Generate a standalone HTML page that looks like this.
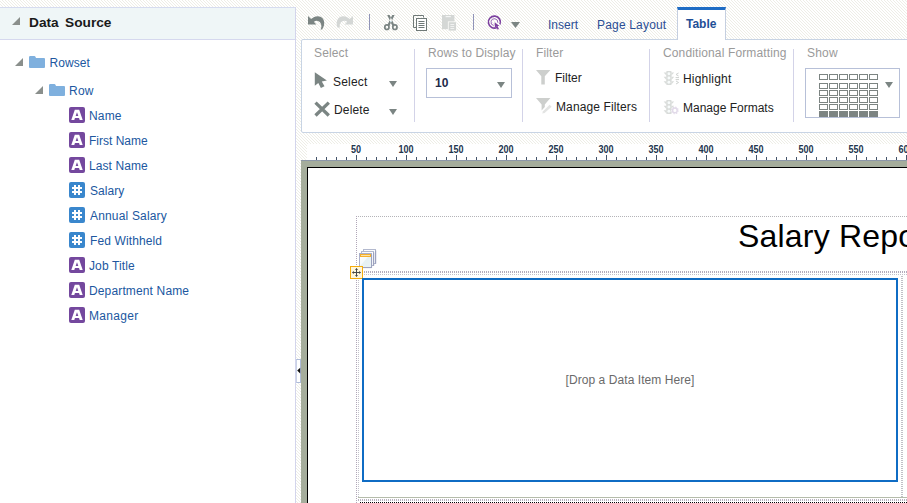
<!DOCTYPE html>
<html>
<head>
<meta charset="utf-8">
<style>
*{box-sizing:border-box;margin:0;padding:0}
html,body{width:907px;height:503px;overflow:hidden}
body{font-family:"Liberation Sans",sans-serif;position:relative;background:#fff}
.abs{position:absolute}
/* left panel */
#lp{left:0;top:7px;width:296px;height:496px;background:#fff;border-top:1px solid #d6dcef;border-right:1px solid #d3d5ec}
#lph{left:0;top:0;width:295px;height:32px;background:#eff6f7;border-bottom:1px solid #d5d8ee}
#lph .t{left:29px;top:7px;font-size:13.7px;font-weight:bold;color:#1a1a1a;word-spacing:2.6px}
.tri{width:0;height:0;border-left:8px solid transparent;border-bottom:8px solid #8a8f8c}
.node{font-size:12px;color:#20579f;white-space:nowrap}
.ico{width:15px;height:15px;border-radius:2px}
/* toolbar */
#tb{left:301px;top:39px;width:620px;height:94px;background:#fff;border:1px solid #c8d4e4;border-radius:2px 0 0 2px}
.gl{font-size:12px;color:#9a9a9a;white-space:nowrap}
.bt{font-size:12px;color:#222;white-space:nowrap}
.vd{width:1px;background:#d3d3e8}
.dd{width:0;height:0;border-left:4.5px solid transparent;border-right:4.5px solid transparent;border-top:6px solid #7b8583}
.tabt{font-size:12px;color:#2b4e94;white-space:nowrap}
</style>
</head>
<body>
<svg class="abs" style="left:0;top:0" width="907" height="503" shape-rendering="crispEdges"><defs><pattern id="st" width="3" height="3" patternUnits="userSpaceOnUse"><rect x="2" y="0" width="1" height="1" fill="#eeeee6"/><rect x="0" y="1" width="1" height="1" fill="#eeeee6"/><rect x="1" y="2" width="1" height="1" fill="#eeeee6"/></pattern></defs><rect width="907" height="503" fill="url(#st)"/></svg>
<!-- LEFT PANEL -->
<div id="lp" class="abs">
  <div id="lph" class="abs">
    <div class="abs tri" style="left:12px;top:9px"></div>
    <div class="abs t">Data Source</div>
  </div>
</div>

<!-- TREE -->
<div class="abs tri" style="left:15px;top:58px"></div>
<svg class="abs" style="left:29px;top:56px" width="16" height="12" viewBox="0 0 16 12"><path d="M0 1.2 Q0 0 1.2 0 H5.3 Q6.2 0 6.6 1 L7 2 H15 Q16 2 16 3 V11 Q16 12 15 12 H1 Q0 12 0 11 Z" fill="#7fb0de"/></svg>
<div class="abs node" style="left:49.4px;top:56px;letter-spacing:.1px">Rowset</div>
<div class="abs tri" style="left:35px;top:86px"></div>
<svg class="abs" style="left:49px;top:84px" width="16" height="12" viewBox="0 0 16 12"><path d="M0 1.2 Q0 0 1.2 0 H5.3 Q6.2 0 6.6 1 L7 2 H15 Q16 2 16 3 V11 Q16 12 15 12 H1 Q0 12 0 11 Z" fill="#7fb0de"/></svg>
<div class="abs node" style="left:69px;top:84px;letter-spacing:0.25px">Row</div>
<svg class="abs" style="left:69px;top:107px" width="16" height="16" viewBox="0 0 16 16"><rect width="16" height="16" rx="2" fill="#74489e"/><path d="M5.8 2.8 H10.2 L13.7 13 H10.7 L10.05 11 H5.95 L5.3 13 H2.3 Z M8 5.3 L6.65 8.9 H9.35 Z" fill="#fff" fill-rule="evenodd"/></svg>
<div class="abs node" style="left:89px;top:109px;letter-spacing:0.15px">Name</div>
<svg class="abs" style="left:69px;top:132px" width="16" height="16" viewBox="0 0 16 16"><rect width="16" height="16" rx="2" fill="#74489e"/><path d="M5.8 2.8 H10.2 L13.7 13 H10.7 L10.05 11 H5.95 L5.3 13 H2.3 Z M8 5.3 L6.65 8.9 H9.35 Z" fill="#fff" fill-rule="evenodd"/></svg>
<div class="abs node" style="left:89px;top:134px">First Name</div>
<svg class="abs" style="left:69px;top:157px" width="16" height="16" viewBox="0 0 16 16"><rect width="16" height="16" rx="2" fill="#74489e"/><path d="M5.8 2.8 H10.2 L13.7 13 H10.7 L10.05 11 H5.95 L5.3 13 H2.3 Z M8 5.3 L6.65 8.9 H9.35 Z" fill="#fff" fill-rule="evenodd"/></svg>
<div class="abs node" style="left:89px;top:159px;letter-spacing:0.08px">Last Name</div>
<svg class="abs" style="left:69px;top:182px" width="16" height="16" viewBox="0 0 16 16"><rect width="16" height="16" rx="2" fill="#3a87cd"/><path d="M5 3 H7 V5 H9 V3 H11 V5 H13 V7 H11 V9 H13 V11 H11 V13 H9 V11 H7 V13 H5 V11 H3 V9 H5 V7 H3 V5 H5 Z M7 7 V9 H9 V7 Z" fill="#fff" fill-rule="evenodd"/></svg>
<div class="abs node" style="left:90px;top:184px;letter-spacing:0.06px">Salary</div>
<svg class="abs" style="left:69px;top:207px" width="16" height="16" viewBox="0 0 16 16"><rect width="16" height="16" rx="2" fill="#3a87cd"/><path d="M5 3 H7 V5 H9 V3 H11 V5 H13 V7 H11 V9 H13 V11 H11 V13 H9 V11 H7 V13 H5 V11 H3 V9 H5 V7 H3 V5 H5 Z M7 7 V9 H9 V7 Z" fill="#fff" fill-rule="evenodd"/></svg>
<div class="abs node" style="left:90px;top:209px;letter-spacing:0.17px">Annual Salary</div>
<svg class="abs" style="left:69px;top:232px" width="16" height="16" viewBox="0 0 16 16"><rect width="16" height="16" rx="2" fill="#3a87cd"/><path d="M5 3 H7 V5 H9 V3 H11 V5 H13 V7 H11 V9 H13 V11 H11 V13 H9 V11 H7 V13 H5 V11 H3 V9 H5 V7 H3 V5 H5 Z M7 7 V9 H9 V7 Z" fill="#fff" fill-rule="evenodd"/></svg>
<div class="abs node" style="left:90px;top:234px;letter-spacing:0.12px">Fed Withheld</div>
<svg class="abs" style="left:69px;top:257px" width="16" height="16" viewBox="0 0 16 16"><rect width="16" height="16" rx="2" fill="#74489e"/><path d="M5.8 2.8 H10.2 L13.7 13 H10.7 L10.05 11 H5.95 L5.3 13 H2.3 Z M8 5.3 L6.65 8.9 H9.35 Z" fill="#fff" fill-rule="evenodd"/></svg>
<div class="abs node" style="left:89px;top:259px;letter-spacing:0.12px">Job Title</div>
<svg class="abs" style="left:69px;top:282px" width="16" height="16" viewBox="0 0 16 16"><rect width="16" height="16" rx="2" fill="#74489e"/><path d="M5.8 2.8 H10.2 L13.7 13 H10.7 L10.05 11 H5.95 L5.3 13 H2.3 Z M8 5.3 L6.65 8.9 H9.35 Z" fill="#fff" fill-rule="evenodd"/></svg>
<div class="abs node" style="left:89px;top:284px;letter-spacing:0.14px">Department Name</div>
<svg class="abs" style="left:69px;top:307px" width="16" height="16" viewBox="0 0 16 16"><rect width="16" height="16" rx="2" fill="#74489e"/><path d="M5.8 2.8 H10.2 L13.7 13 H10.7 L10.05 11 H5.95 L5.3 13 H2.3 Z M8 5.3 L6.65 8.9 H9.35 Z" fill="#fff" fill-rule="evenodd"/></svg>
<div class="abs node" style="left:89px;top:309px;letter-spacing:0.3px">Manager</div>

<!-- TOOLBAR PANEL -->
<div id="tb" class="abs"></div>

<!-- TOP TOOLBAR -->
<svg class="abs" style="left:300px;top:8px" width="230" height="30" viewBox="300 8 230 30">
<!-- undo -->
<path d="M308 16 L311.2 19 C314.5 15.6 320 15 322.8 18.6 C325 21.6 324.6 26.4 322 29.6 L320.5 29.6 C321.7 27.6 321.7 25 320.6 23.2 C319.4 21 316.4 20 313.8 21.8 L316.4 24.6 L308 24.6 Z" fill="#7b8583"/>
<!-- redo -->
<path d="M 353 16 L 349.8 19 C 346.5 15.6 341 15 338.2 18.6 C 336.4 21 336.2 24.6 337.4 27.5 L 340.1 27.5 C 339.4 26 339.5 24.6 340.4 23.2 C 341.6 21 344.6 20 347.2 21.8 L 344.6 24.6 L 353 24.6 Z" fill="#d4d7d5"/>
<rect x="369" y="14" width="1" height="16" fill="#9094b8"/>
<!-- scissors -->
<g fill="none" stroke="#7b8583" stroke-width="1.7">
<ellipse cx="386.9" cy="27.2" rx="2.1" ry="2.3"/><ellipse cx="394.9" cy="27.2" rx="2.1" ry="2.3"/>
</g>
<path d="M387.2 15 L389.6 15 L394.4 25 L392.4 25.9 Z M394.6 15 L392.2 15 L387.4 25 L389.4 25.9 Z" fill="#7b8583"/>
<circle cx="390.9" cy="21.6" r="0.8" fill="#cfe6ee"/>
<!-- copy -->
<g fill="none" stroke="#6f7977" stroke-width="1">
<path d="M423.5 17.5 V15.5 H413.5 V27.5 H416"/>
<rect x="416.5" y="18.5" width="10" height="12" fill="#fff"/>
<path d="M418.5 21.5 H424.5 M418.5 23.5 H424.5 M418.5 25.5 H424.5 M418.5 27.5 H424.5"/>
</g>
<!-- paste -->
<path d="M442 15 H454.4 V29.2 H442 Z" fill="#d4d7d5"/>
<path d="M445.6 16.6 H450.8" stroke="#f4f5f4" stroke-width="1.2"/>
<rect x="447.9" y="21.4" width="8.6" height="9.6" fill="#fbfbf9"/>
<rect x="448.7" y="22.2" width="7.3" height="8.4" fill="#d4d7d5"/>
<path d="M450.4 24.5 H454.2 M450.4 26.5 H454.2 M450.4 28.5 H454.2" stroke="#f1f2f1" stroke-width="1"/>
<rect x="473" y="14" width="1" height="16" fill="#9094b8"/>
<!-- target -->
<g fill="none" stroke="#7b3f9f">
<path d="M499.96 24.35 A6 6 0 1 0 497.03 27.49" stroke-width="1.6"/>
<path d="M497.75 22.69 A3.4 3.4 0 1 0 493.81 25.45" stroke-width="0.9" stroke="#8f5bb0"/>
</g>
<path d="M494.6 22.3 L494.9 27.8 L496.3 26.6 L497.6 29.7 L498.9 29.1 L497.6 26.1 L499.5 25.9 Z" fill="#7b3f9f"/>
<path d="M511 22 H520 L515.5 28 Z" fill="#7b8583"/>
</svg>
<div class="abs tabt" style="left:548px;top:18px">Insert</div>
<div class="abs tabt" style="left:597px;top:18px;letter-spacing:.18px">Page Layout</div>
<div class="abs" style="left:677px;top:7px;width:49px;height:33px;background:#fff;border-left:1px solid #c5cfe0;border-right:1px solid #c5cfe0;border-top:3px solid #1e6cc4"></div>
<div class="abs tabt" style="left:686px;top:17px;font-weight:bold;color:#1f4f97">Table</div>
<!-- PANEL CONTENT -->
<div class="abs gl" style="left:314px;top:46px;letter-spacing:0.15px">Select</div>
<div class="abs gl" style="left:428px;top:46px;letter-spacing:0.1px">Rows to Display</div>
<div class="abs gl" style="left:536px;top:46px;letter-spacing:0.1px">Filter</div>
<div class="abs gl" style="left:663px;top:46px;letter-spacing:0.13px">Conditional Formatting</div>
<div class="abs gl" style="left:807px;top:46px;letter-spacing:0.2px">Show</div>
<div class="abs vd" style="left:414px;top:49px;height:73px"></div>
<div class="abs vd" style="left:522px;top:49px;height:73px"></div>
<div class="abs vd" style="left:649px;top:49px;height:73px"></div>
<div class="abs vd" style="left:793px;top:49px;height:73px"></div>
<svg class="abs" style="left:314px;top:72px" width="14" height="17" viewBox="0 0 14 17"><path d="M0.8 0.3 L0.8 13.8 L4.3 10.9 L6.9 16 L10.5 14.2 L7.8 9.4 L12.9 8.4 Z" fill="#7b8583"/></svg>
<div class="abs bt" style="left:333px;top:75px;letter-spacing:.2px">Select</div>
<div class="abs dd" style="left:389px;top:81px"></div>
<svg class="abs" style="left:314px;top:101px" width="17" height="17" viewBox="0 0 17 17"><path d="M1.5 1.6 L14.8 14.5 M14.8 1.6 L1.5 14.5" stroke="#7b8583" stroke-width="3.3" fill="none"/></svg>
<div class="abs bt" style="left:334px;top:103px;letter-spacing:.15px">Delete</div>
<div class="abs dd" style="left:389px;top:109px"></div>
<div class="abs" style="left:426px;top:68px;width:86px;height:30px;border:1px solid #b7c0d8;background:#fff"></div>
<div class="abs" style="left:435px;top:76px;font-size:12px;font-weight:bold;color:#1e2a4a">10</div>
<div class="abs dd" style="left:497px;top:82px"></div>
<svg class="abs" style="left:536px;top:70px" width="15" height="15" viewBox="0 0 15 15"><path d="M0 0 H14.4 L8.8 6.2 V14.6 H5.3 V6.2 Z" fill="#cdcfcd"/></svg>
<div class="abs bt" style="left:555px;top:71px">Filter</div>
<svg class="abs" style="left:536px;top:98px" width="17" height="16" viewBox="0 0 17 16"><path d="M0 0 H14.4 L8.8 6.4 V9 L5.6 12.4 V6.4 Z" fill="#cdcfcd"/><path d="M13.6 6.8 L15.6 8.8 L8.6 15 L6.2 15.6 L7 13.2 Z" fill="#e3e4e3"/></svg>
<div class="abs bt" style="left:556px;top:100px;letter-spacing:.12px">Manage Filters</div>
<svg class="abs" style="left:663px;top:71px" width="18" height="15" viewBox="0 0 18 15"><g fill="#d9dcda"><rect x="3.2" y="0" width="5.4" height="14" rx="1"/><path d="M3.4 1.4 H0.6 L3.4 4.6 Z M3.4 5.8 H0.6 L3.4 9 Z M3.4 10.2 H0.6 L3.4 13.4 Z M8.4 1.4 H11.2 L8.4 4.6 Z M8.4 5.8 H11.2 L8.4 9 Z M8.4 10.2 H11.2 L8.4 13.4 Z"/></g><g fill="#f7fbfb"><circle cx="5.9" cy="2.8" r="1.45"/><circle cx="5.9" cy="7" r="1.45"/><circle cx="5.9" cy="11.2" r="1.45"/></g><g fill="none" stroke="#cfd2d0" stroke-width="1"><path d="M15.6 2 L13 3.5 L15.6 5"/><path d="M12.6 6.6 H16 M12.6 8.6 H16"/><path d="M13 10 L15.6 11.5 L13 13"/></g></svg>
<div class="abs bt" style="left:683px;top:72px;letter-spacing:.2px">Highlight</div>
<svg class="abs" style="left:663px;top:100.4px" width="18" height="16" viewBox="0 0 18 16"><g fill="#d9dcda"><rect x="3.2" y="0" width="5.4" height="14" rx="1"/><path d="M3.4 1.4 H0.6 L3.4 4.6 Z M3.4 5.8 H0.6 L3.4 9 Z M3.4 10.2 H0.6 L3.4 13.4 Z M8.4 1.4 H11.2 L8.4 4.6 Z M8.4 5.8 H11.2 L8.4 9 Z M8.4 10.2 H11.2 L8.4 13.4 Z"/></g><g fill="#f7fbfb"><circle cx="5.9" cy="2.8" r="1.45"/><circle cx="5.9" cy="7" r="1.45"/><circle cx="5.9" cy="11.2" r="1.45"/></g><circle cx="11.9" cy="10.4" r="3.6" fill="#fff"/><circle cx="11.9" cy="10.4" r="2.3" fill="none" stroke="#e2dae9" stroke-width="1.5"/><circle cx="11.9" cy="10.4" r="3.3" fill="none" stroke="#e2dae9" stroke-width="1.1" stroke-dasharray="1.3 1.29"/></svg>
<div class="abs bt" style="left:683px;top:101px">Manage Formats</div>
<div class="abs" style="left:805px;top:68px;width:95px;height:50px;border:1px solid #b7c0d8;background:#fff"></div>
<svg class="abs" style="left:819px;top:74px" width="60" height="44" viewBox="0 0 60 44"><rect x="0" y="0" width="9" height="6" fill="#7c8482"/><rect x="1" y="1" width="7" height="4" fill="#fff"/><rect x="0" y="9" width="9" height="6" fill="#7c8482"/><rect x="1" y="10" width="7" height="4" fill="#fff"/><rect x="0" y="16" width="9" height="6" fill="#7c8482"/><rect x="1" y="17" width="7" height="4" fill="#fff"/><rect x="0" y="23" width="9" height="6" fill="#7c8482"/><rect x="1" y="24" width="7" height="4" fill="#fff"/><rect x="0" y="30" width="9" height="6" fill="#7c8482"/><rect x="1" y="31" width="7" height="4" fill="#fff"/><rect x="0" y="37" width="9" height="6" fill="#7c8482"/><rect x="10" y="0" width="9" height="6" fill="#7c8482"/><rect x="11" y="1" width="7" height="4" fill="#fff"/><rect x="10" y="9" width="9" height="6" fill="#7c8482"/><rect x="11" y="10" width="7" height="4" fill="#fff"/><rect x="10" y="16" width="9" height="6" fill="#7c8482"/><rect x="11" y="17" width="7" height="4" fill="#fff"/><rect x="10" y="23" width="9" height="6" fill="#7c8482"/><rect x="11" y="24" width="7" height="4" fill="#fff"/><rect x="10" y="30" width="9" height="6" fill="#7c8482"/><rect x="11" y="31" width="7" height="4" fill="#fff"/><rect x="10" y="37" width="9" height="6" fill="#7c8482"/><rect x="20" y="0" width="9" height="6" fill="#7c8482"/><rect x="21" y="1" width="7" height="4" fill="#fff"/><rect x="20" y="9" width="9" height="6" fill="#7c8482"/><rect x="21" y="10" width="7" height="4" fill="#fff"/><rect x="20" y="16" width="9" height="6" fill="#7c8482"/><rect x="21" y="17" width="7" height="4" fill="#fff"/><rect x="20" y="23" width="9" height="6" fill="#7c8482"/><rect x="21" y="24" width="7" height="4" fill="#fff"/><rect x="20" y="30" width="9" height="6" fill="#7c8482"/><rect x="21" y="31" width="7" height="4" fill="#fff"/><rect x="20" y="37" width="9" height="6" fill="#7c8482"/><rect x="30" y="0" width="9" height="6" fill="#7c8482"/><rect x="31" y="1" width="7" height="4" fill="#fff"/><rect x="30" y="9" width="9" height="6" fill="#7c8482"/><rect x="31" y="10" width="7" height="4" fill="#fff"/><rect x="30" y="16" width="9" height="6" fill="#7c8482"/><rect x="31" y="17" width="7" height="4" fill="#fff"/><rect x="30" y="23" width="9" height="6" fill="#7c8482"/><rect x="31" y="24" width="7" height="4" fill="#fff"/><rect x="30" y="30" width="9" height="6" fill="#7c8482"/><rect x="31" y="31" width="7" height="4" fill="#fff"/><rect x="30" y="37" width="9" height="6" fill="#7c8482"/><rect x="40" y="0" width="9" height="6" fill="#7c8482"/><rect x="41" y="1" width="7" height="4" fill="#fff"/><rect x="40" y="9" width="9" height="6" fill="#7c8482"/><rect x="41" y="10" width="7" height="4" fill="#fff"/><rect x="40" y="16" width="9" height="6" fill="#7c8482"/><rect x="41" y="17" width="7" height="4" fill="#fff"/><rect x="40" y="23" width="9" height="6" fill="#7c8482"/><rect x="41" y="24" width="7" height="4" fill="#fff"/><rect x="40" y="30" width="9" height="6" fill="#7c8482"/><rect x="41" y="31" width="7" height="4" fill="#fff"/><rect x="40" y="37" width="9" height="6" fill="#7c8482"/><rect x="50" y="0" width="9" height="6" fill="#7c8482"/><rect x="51" y="1" width="7" height="4" fill="#fff"/><rect x="50" y="9" width="9" height="6" fill="#7c8482"/><rect x="51" y="10" width="7" height="4" fill="#fff"/><rect x="50" y="16" width="9" height="6" fill="#7c8482"/><rect x="51" y="17" width="7" height="4" fill="#fff"/><rect x="50" y="23" width="9" height="6" fill="#7c8482"/><rect x="51" y="24" width="7" height="4" fill="#fff"/><rect x="50" y="30" width="9" height="6" fill="#7c8482"/><rect x="51" y="31" width="7" height="4" fill="#fff"/><rect x="50" y="37" width="9" height="6" fill="#7c8482"/></svg>
<div class="abs dd" style="left:885px;top:82px"></div>
<!-- CANVAS -->
<div class="abs" style="left:307px;top:144px;width:600px;height:17px;background:#fff"></div>
<svg class="abs" style="left:307px;top:144px" width="600" height="17" viewBox="0 0 600 17" shape-rendering="crispEdges"><rect x="9" y="13" width="1" height="4" fill="#44546a"/><rect x="19" y="13" width="1" height="4" fill="#44546a"/><rect x="29" y="13" width="1" height="4" fill="#44546a"/><rect x="39" y="13" width="1" height="4" fill="#44546a"/><rect x="49" y="11" width="1" height="6" fill="#44546a"/><rect x="59" y="13" width="1" height="4" fill="#44546a"/><rect x="69" y="13" width="1" height="4" fill="#44546a"/><rect x="79" y="13" width="1" height="4" fill="#44546a"/><rect x="89" y="13" width="1" height="4" fill="#44546a"/><rect x="99" y="11" width="1" height="6" fill="#44546a"/><rect x="109" y="13" width="1" height="4" fill="#44546a"/><rect x="119" y="13" width="1" height="4" fill="#44546a"/><rect x="129" y="13" width="1" height="4" fill="#44546a"/><rect x="139" y="13" width="1" height="4" fill="#44546a"/><rect x="149" y="11" width="1" height="6" fill="#44546a"/><rect x="159" y="13" width="1" height="4" fill="#44546a"/><rect x="169" y="13" width="1" height="4" fill="#44546a"/><rect x="179" y="13" width="1" height="4" fill="#44546a"/><rect x="189" y="13" width="1" height="4" fill="#44546a"/><rect x="199" y="11" width="1" height="6" fill="#44546a"/><rect x="209" y="13" width="1" height="4" fill="#44546a"/><rect x="219" y="13" width="1" height="4" fill="#44546a"/><rect x="229" y="13" width="1" height="4" fill="#44546a"/><rect x="239" y="13" width="1" height="4" fill="#44546a"/><rect x="249" y="11" width="1" height="6" fill="#44546a"/><rect x="259" y="13" width="1" height="4" fill="#44546a"/><rect x="269" y="13" width="1" height="4" fill="#44546a"/><rect x="279" y="13" width="1" height="4" fill="#44546a"/><rect x="289" y="13" width="1" height="4" fill="#44546a"/><rect x="299" y="11" width="1" height="6" fill="#44546a"/><rect x="309" y="13" width="1" height="4" fill="#44546a"/><rect x="319" y="13" width="1" height="4" fill="#44546a"/><rect x="329" y="13" width="1" height="4" fill="#44546a"/><rect x="339" y="13" width="1" height="4" fill="#44546a"/><rect x="349" y="11" width="1" height="6" fill="#44546a"/><rect x="359" y="13" width="1" height="4" fill="#44546a"/><rect x="369" y="13" width="1" height="4" fill="#44546a"/><rect x="379" y="13" width="1" height="4" fill="#44546a"/><rect x="389" y="13" width="1" height="4" fill="#44546a"/><rect x="399" y="11" width="1" height="6" fill="#44546a"/><rect x="409" y="13" width="1" height="4" fill="#44546a"/><rect x="419" y="13" width="1" height="4" fill="#44546a"/><rect x="429" y="13" width="1" height="4" fill="#44546a"/><rect x="439" y="13" width="1" height="4" fill="#44546a"/><rect x="449" y="11" width="1" height="6" fill="#44546a"/><rect x="459" y="13" width="1" height="4" fill="#44546a"/><rect x="469" y="13" width="1" height="4" fill="#44546a"/><rect x="479" y="13" width="1" height="4" fill="#44546a"/><rect x="489" y="13" width="1" height="4" fill="#44546a"/><rect x="499" y="11" width="1" height="6" fill="#44546a"/><rect x="509" y="13" width="1" height="4" fill="#44546a"/><rect x="519" y="13" width="1" height="4" fill="#44546a"/><rect x="529" y="13" width="1" height="4" fill="#44546a"/><rect x="539" y="13" width="1" height="4" fill="#44546a"/><rect x="549" y="11" width="1" height="6" fill="#44546a"/><rect x="559" y="13" width="1" height="4" fill="#44546a"/><rect x="569" y="13" width="1" height="4" fill="#44546a"/><rect x="579" y="13" width="1" height="4" fill="#44546a"/><rect x="589" y="13" width="1" height="4" fill="#44546a"/><rect x="599" y="11" width="1" height="6" fill="#44546a"/></svg>
<div class="abs" style="left:335.9px;top:144px;width:40px;text-align:center;font-size:10.3px;font-weight:bold;color:#22354d;line-height:11px;transform:scaleX(.88)">50</div>
<div class="abs" style="left:385.9px;top:144px;width:40px;text-align:center;font-size:10.3px;font-weight:bold;color:#22354d;line-height:11px;transform:scaleX(.88)">100</div>
<div class="abs" style="left:435.9px;top:144px;width:40px;text-align:center;font-size:10.3px;font-weight:bold;color:#22354d;line-height:11px;transform:scaleX(.88)">150</div>
<div class="abs" style="left:485.9px;top:144px;width:40px;text-align:center;font-size:10.3px;font-weight:bold;color:#22354d;line-height:11px;transform:scaleX(.88)">200</div>
<div class="abs" style="left:535.9px;top:144px;width:40px;text-align:center;font-size:10.3px;font-weight:bold;color:#22354d;line-height:11px;transform:scaleX(.88)">250</div>
<div class="abs" style="left:585.9px;top:144px;width:40px;text-align:center;font-size:10.3px;font-weight:bold;color:#22354d;line-height:11px;transform:scaleX(.88)">300</div>
<div class="abs" style="left:635.9px;top:144px;width:40px;text-align:center;font-size:10.3px;font-weight:bold;color:#22354d;line-height:11px;transform:scaleX(.88)">350</div>
<div class="abs" style="left:685.9px;top:144px;width:40px;text-align:center;font-size:10.3px;font-weight:bold;color:#22354d;line-height:11px;transform:scaleX(.88)">400</div>
<div class="abs" style="left:735.9px;top:144px;width:40px;text-align:center;font-size:10.3px;font-weight:bold;color:#22354d;line-height:11px;transform:scaleX(.88)">450</div>
<div class="abs" style="left:785.9px;top:144px;width:40px;text-align:center;font-size:10.3px;font-weight:bold;color:#22354d;line-height:11px;transform:scaleX(.88)">500</div>
<div class="abs" style="left:835.9px;top:144px;width:40px;text-align:center;font-size:10.3px;font-weight:bold;color:#22354d;line-height:11px;transform:scaleX(.88)">550</div>
<div class="abs" style="left:885.9px;top:144px;width:40px;text-align:center;font-size:10.3px;font-weight:bold;color:#22354d;line-height:11px;transform:scaleX(.88)">600</div>
<div class="abs" style="left:935.9px;top:144px;width:40px;text-align:center;font-size:10.3px;font-weight:bold;color:#22354d;line-height:11px;transform:scaleX(.88)">650</div>
<div class="abs" style="left:301px;top:160px;width:606px;height:343px;background:#a5ad9c;border-top:1px solid #8c97a8"></div>
<div class="abs" style="left:307px;top:167px;width:605px;height:340px;background:#fff;border:1px solid #000;border-width:1px 0 0 1px"></div>
<div class="abs" style="left:356px;top:216px;width:551px;height:1px;background:repeating-linear-gradient(90deg,#b4b4b8 0,#b4b4b8 1px,transparent 1px,transparent 2px)"></div>
<div class="abs" style="left:356px;top:216px;width:1px;height:287px;background:repeating-linear-gradient(180deg,#b0a6b8 0,#b0a6b8 1px,transparent 1px,transparent 2px)"></div>
<div class="abs" style="left:364px;top:271px;width:543px;height:2px;background:repeating-linear-gradient(90deg,#b3acbc 0,#b3acbc 1px,transparent 1px,transparent 2px)"></div>
<div class="abs" style="left:364px;top:274px;width:543px;height:1px;background:repeating-linear-gradient(90deg,#c2c2ca 0,#c2c2ca 1px,transparent 1px,transparent 2px)"></div>
<div class="abs" style="left:358px;top:280px;width:1px;height:218px;background:repeating-linear-gradient(180deg,#c4c4cc 0,#c4c4cc 1px,transparent 1px,transparent 2px)"></div>
<div class="abs" style="left:901px;top:276px;width:2px;height:222px;background:repeating-linear-gradient(180deg,#c0c0c6 0,#c0c0c6 1px,transparent 1px,transparent 2px)"></div>
<div class="abs" style="left:358px;top:497px;width:549px;height:1px;background:#b5bcab"></div>
<div class="abs" style="left:358px;top:499px;width:549px;height:2px;background:repeating-linear-gradient(90deg,#b9b2c0 0,#b9b2c0 1px,transparent 1px,transparent 2px)"></div>
<div class="abs" style="left:360px;top:502px;width:547px;height:1px;background:repeating-linear-gradient(90deg,#000 0,#000 1px,transparent 1px,transparent 2px)"></div>
<div class="abs" style="left:738px;top:217.8px;font-size:32px;color:#000;white-space:nowrap;line-height:36px;letter-spacing:.2px">Salary Report</div>
<svg class="abs" style="left:359px;top:249px" width="19" height="20" viewBox="0 0 19 20">
<defs><linearGradient id="lg1" x1="0" y1="0" x2="1" y2="1"><stop offset="0" stop-color="#ffffff"/><stop offset=".45" stop-color="#f6fafb"/><stop offset=".5" stop-color="#e6f1f3"/><stop offset="1" stop-color="#eaf3f5"/></linearGradient></defs>
<rect x="4.5" y="0.5" width="12" height="14" fill="#fbfcfd" stroke="#b3b9ce"/>
<path d="M16.6 1.5 V14.8" stroke="#9ca2bf" stroke-width="1.2"/>
<rect x="2.5" y="2.5" width="12" height="14" fill="#fbfcfd" stroke="#b3b9ce"/>
<path d="M14.6 3.5 V16.8" stroke="#9ca2bf" stroke-width="1.2"/>
<rect x="0.5" y="4.5" width="12" height="14" fill="url(#lg1)" stroke="#a9afca"/>
<path d="M12.6 5.5 V18.6 H1.5" stroke="#9ca2bf" stroke-width="1" fill="none"/>
<rect x="1" y="5" width="11" height="3" fill="#f6b02c"/>
<rect x="2" y="6.1" width="9" height="0.8" fill="#fdf0c8"/>
</svg>
<div class="abs" style="left:350px;top:266px;width:13px;height:13px;background:#fff7dc;border:1px solid #f6ac0c"></div>
<svg class="abs" style="left:350px;top:266px" width="13" height="13" viewBox="0 0 13 13"><path d="M6.5 2.6 V10.4 M2.6 6.5 H10.4" stroke="#4a4a4a" stroke-width="1"/><path d="M6.5 2 L8 3.9 H5 Z M6.5 11 L8 9.1 H5 Z M2 6.5 L3.9 5 V8 Z M11 6.5 L9.1 5 V8 Z" fill="#4a4a4a"/></svg>
<div class="abs" style="left:362px;top:278px;width:536px;height:204px;border:2px solid #0f6cc4;background:#fff"></div>
<div class="abs" style="left:362px;top:373px;width:536px;text-align:center;font-size:12px;color:#6a6a6a;letter-spacing:.07px">[Drop a Data Item Here]</div>
<div class="abs" style="left:296px;top:359px;width:5px;height:24px;background:#fff;border:1px solid #aebbd8;border-left-color:#c9d2e6"></div>
<svg class="abs" style="left:296px;top:366px" width="5" height="9" viewBox="0 0 5 9"><path d="M4.2 1.8 V7.4 L1.2 4.6 Z" fill="#111"/></svg>
</body>
</html>
